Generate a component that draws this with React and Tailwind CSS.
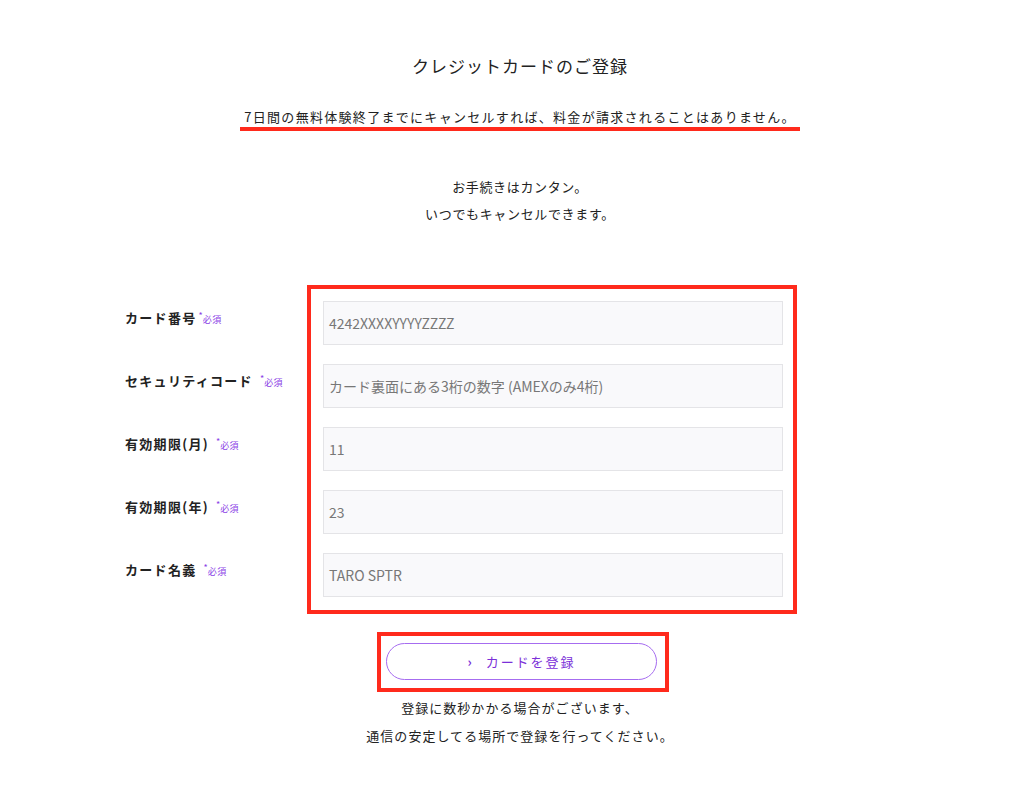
import React from 'react';

const fields = [
  { label: 'カード番号', gap: false, value: '4242XXXXYYYYZZZZ' },
  { label: 'セキュリティコード', gap: true, value: 'カード裏面にある3桁の数字 (AMEXのみ4桁)' },
  { label: '有効期限(月)', gap: true, value: '11' },
  { label: '有効期限(年)', gap: true, value: '23' },
  { label: 'カード名義', gap: true, value: 'TARO SPTR' },
];

const font = { fontFamily: '"Noto Sans CJK JP", "Noto Sans", sans-serif' };

const Required = ({ gap }) => (
  <span className={`flex items-center text-[#8b3fe6] ${gap ? 'ml-[7px]' : 'ml-[2px]'}`}>
    <span className="text-[9px] leading-none -mt-[5px]">*</span>
    <span className="text-[9px] leading-none tracking-[0.05em] mt-[2px]">必須</span>
  </span>
);

const App = () => {
  return (
    <div className="min-h-screen bg-white pl-[16px] text-[#222]" style={font}>
      <div className="mx-auto w-[790px] flex flex-col items-center pt-[54px] pb-10">
        <h1 className="text-[17px] leading-[24px] tracking-[1px] font-normal">クレジットカードのご登録</h1>

        <p className="mt-[29px] px-[4px] text-[13px] leading-[20px] tracking-[0.1em] border-b-4 border-[#ff2a1c]">
          7日間の無料体験終了までにキャンセルすれば、料金が請求されることはありません。
        </p>

        <div className="mt-[42px] text-center text-[13px] leading-[27px] tracking-[0.05em]">
          <p>お手続きはカンタン。</p>
          <p>いつでもキャンセルできます。</p>
        </div>

        <div className="self-start mt-[58px] flex">
          <div className="w-[182px] flex flex-col gap-[19px] pt-[16px]">
            {fields.map((f) => (
              <div key={f.label} className="h-[44px] flex items-center pb-[10px]">
                <span className="text-[13px] font-bold tracking-[0.1em]">{f.label}</span>
                <Required gap={f.gap} />
              </div>
            ))}
          </div>
          <div className="w-[490px] border-4 border-[#ff2a1c] pt-[12px] pl-[12px] pr-[10px] pb-[13px] flex flex-col gap-[19px]">
            {fields.map((f) => (
              <div
                key={f.label}
                className="h-[44px] bg-[#f9f9fb] border border-[#e4e4e7] flex items-center px-[5px] text-[14px] text-[#777]"
              >
                {f.value}
              </div>
            ))}
          </div>
        </div>

        <div className="mt-[18px] ml-[6px] border-4 border-[#ff2a1c] pt-[7px] pb-[8px] pl-[5px] pr-[8px]">
          <button
            type="button"
            className="w-[271px] h-[37px] rounded-full border border-[#a66cf0] bg-white flex items-center justify-center text-[13px] tracking-[0.15em] text-[#7b2fd8]"
          >
            <span className="mr-[12px] font-bold">›</span>
            カードを登録
          </button>
        </div>

        <div className="mt-[2px] text-center text-[13px] leading-[28px] tracking-[0.08em]">
          <p>登録に数秒かかる場合がございます、</p>
          <p>通信の安定してる場所で登録を行ってください。</p>
        </div>
      </div>
    </div>
  );
};

export default App;
